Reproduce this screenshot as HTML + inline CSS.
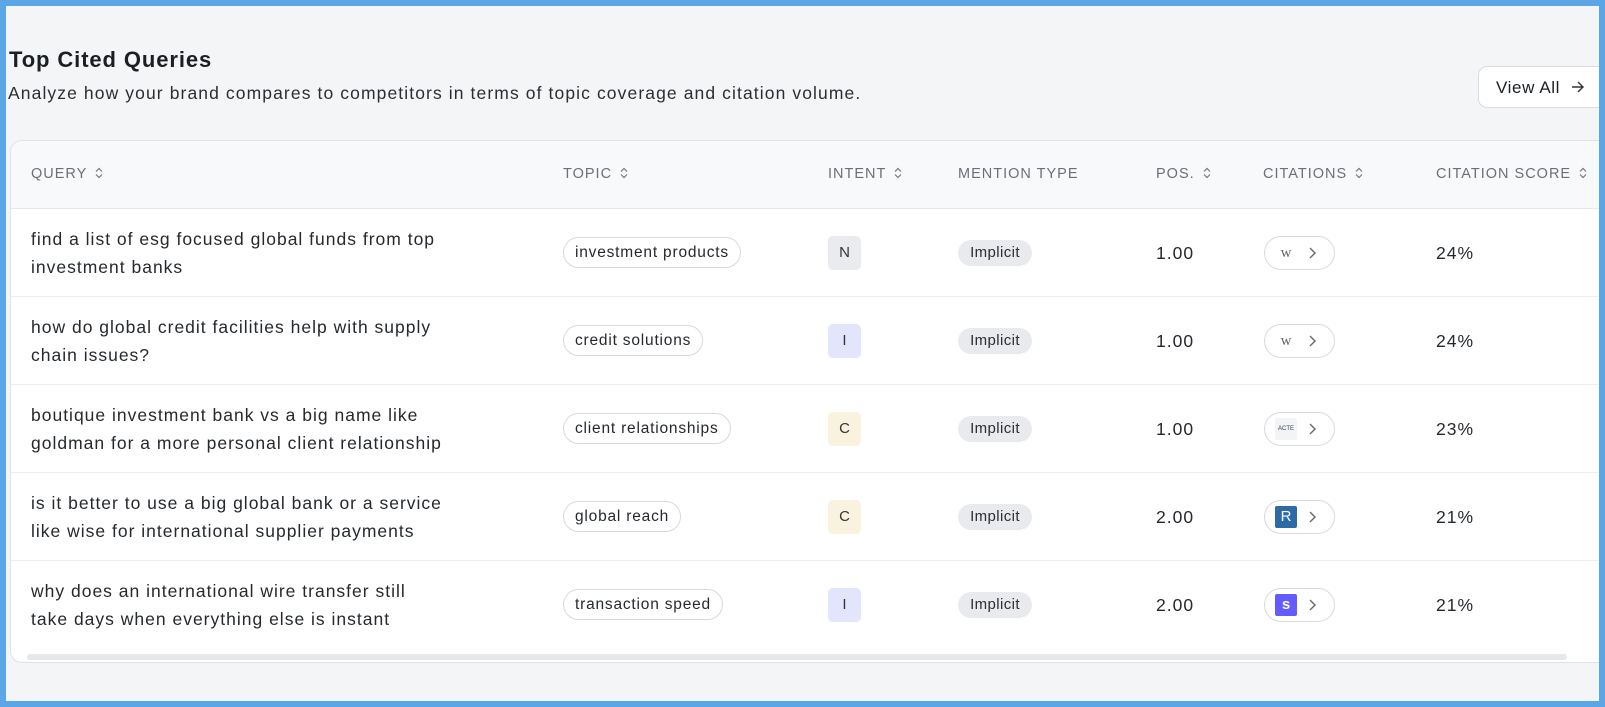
<!DOCTYPE html>
<html><head><style>
*{box-sizing:border-box;margin:0;padding:0}
body{width:1605px;height:707px;overflow:hidden;background:#5aa6e6;font-family:"Liberation Sans",sans-serif;color:#1f2328;position:relative}
.page{position:absolute;left:6px;top:6px;width:1593px;height:695px;background:#f4f5f7;overflow:hidden}
h1{position:absolute;left:3px;top:41px;font-size:22px;font-weight:bold;color:#1b1f24;letter-spacing:.9px}
.sub{position:absolute;left:2px;top:77px;font-size:17.5px;color:#2a2e33;letter-spacing:1.1px}
.btn{position:absolute;left:1472px;top:60px;width:180px;height:42px;background:#fff;border:1px solid #d9dce0;border-radius:9px;font-size:17px;padding:11px 0 0 17px;color:#1b1f24;letter-spacing:.6px}
.card{position:absolute;left:4px;top:134px;width:1620px;height:523px;background:#fff;border:1px solid #dfe2e6;border-radius:12px;overflow:hidden}
.hdr{position:absolute;left:0;top:0;width:100%;height:68px;background:#f8f9fa;border-bottom:1px solid #e6e8eb}
.h{position:absolute;top:25px;font-size:14.5px;color:#6b7078;letter-spacing:1px;white-space:nowrap}
.h svg{vertical-align:-1px;margin-left:8px}
.row{position:absolute;left:0;width:100%;height:88px;border-bottom:1px solid #eceef0}
.q{position:absolute;left:20px;top:16px;font-size:17.5px;line-height:28px;color:#25292e;letter-spacing:1px;white-space:nowrap}
.topic{position:absolute;left:552px;top:28px;height:31px;border:1px solid #d6d9dd;border-radius:16px;padding:6px 11px;font-size:15.5px;color:#25292e;white-space:nowrap;letter-spacing:.8px}
.int{position:absolute;left:817px;top:27px;width:33px;height:34px;border-radius:5px;font-size:15px;text-align:center;line-height:34px;color:#333}
.imp{position:absolute;left:947px;top:31px;width:74px;height:26px;border-radius:13px;background:#e8eaed;text-align:center;line-height:26px;font-size:15px;color:#2a2e33;letter-spacing:.4px}
.pos{position:absolute;left:1145px;top:34px;font-size:17.5px;color:#25292e;letter-spacing:1px}
.cit{position:absolute;left:1253px;top:27px;width:71px;height:34px;border:1px solid #d6d9dd;border-radius:17px}
.ic{position:absolute;left:10px;top:5px;width:22px;height:22px;font-size:13px;text-align:center;line-height:22px;border-radius:2px}
.ch{position:absolute;left:43px;top:10px}
.sc{position:absolute;left:1425px;top:34px;font-size:17.5px;color:#25292e;letter-spacing:1px}
.sb{position:absolute;left:16px;top:513px;width:1540px;height:6px;background:#e6e8eb;border-radius:3px}
</style></head><body><div class="page">
<h1>Top Cited Queries</h1>
<div class="sub">Analyze how your brand compares to competitors in terms of topic coverage and citation volume.</div>
<div class="btn">View All &nbsp;<svg width="14" height="14" viewBox="0 0 14 14" style="vertical-align:-1px"><path d="M1 7h11M7 2l5 5-5 5" stroke="#333" stroke-width="1.4" fill="none"/></svg></div>
<div class="card">
<div class="hdr">
<div class="h" style="left:20px">QUERY<svg width="8" height="12" viewBox="0 0 8 12"><path d="M1 4.5 4 1.5 7 4.5M1 7.5 4 10.5 7 7.5" stroke="#777" stroke-width="1.2" fill="none"/></svg></div>
<div class="h" style="left:552px">TOPIC<svg width="8" height="12" viewBox="0 0 8 12"><path d="M1 4.5 4 1.5 7 4.5M1 7.5 4 10.5 7 7.5" stroke="#777" stroke-width="1.2" fill="none"/></svg></div>
<div class="h" style="left:817px">INTENT<svg width="8" height="12" viewBox="0 0 8 12"><path d="M1 4.5 4 1.5 7 4.5M1 7.5 4 10.5 7 7.5" stroke="#777" stroke-width="1.2" fill="none"/></svg></div>
<div class="h" style="left:947px">MENTION TYPE</div>
<div class="h" style="left:1145px">POS.<svg width="8" height="12" viewBox="0 0 8 12"><path d="M1 4.5 4 1.5 7 4.5M1 7.5 4 10.5 7 7.5" stroke="#777" stroke-width="1.2" fill="none"/></svg></div>
<div class="h" style="left:1252px">CITATIONS<svg width="8" height="12" viewBox="0 0 8 12"><path d="M1 4.5 4 1.5 7 4.5M1 7.5 4 10.5 7 7.5" stroke="#777" stroke-width="1.2" fill="none"/></svg></div>
<div class="h" style="left:1425px">CITATION SCORE<svg width="8" height="12" viewBox="0 0 8 12"><path d="M1 4.5 4 1.5 7 4.5M1 7.5 4 10.5 7 7.5" stroke="#777" stroke-width="1.2" fill="none"/></svg></div>
</div>
<div class="row" style="top:68px"><div class="q">find a list of esg focused global funds from top<br>investment banks</div><div class="topic">investment products</div><div class="int" style="background:#e9ebee">N</div><div class="imp">Implicit</div><div class="pos">1.00</div><div class="cit"><div class="ic" style="font-family:'Liberation Serif',serif;color:#666;font-size:15px">w</div><svg class="ch" width="8" height="12" viewBox="0 0 8 12"><path d="M2 1l5 5-5 5" stroke="#666" stroke-width="1.4" fill="none"/></svg></div><div class="sc">24%</div></div>
<div class="row" style="top:156px"><div class="q">how do global credit facilities help with supply<br>chain issues?</div><div class="topic">credit solutions</div><div class="int" style="background:#e2e5fb">I</div><div class="imp">Implicit</div><div class="pos">1.00</div><div class="cit"><div class="ic" style="font-family:'Liberation Serif',serif;color:#666;font-size:15px">w</div><svg class="ch" width="8" height="12" viewBox="0 0 8 12"><path d="M2 1l5 5-5 5" stroke="#666" stroke-width="1.4" fill="none"/></svg></div><div class="sc">24%</div></div>
<div class="row" style="top:244px"><div class="q">boutique investment bank vs a big name like<br>goldman for a more personal client relationship</div><div class="topic">client relationships</div><div class="int" style="background:#f8f2df">C</div><div class="imp">Implicit</div><div class="pos">1.00</div><div class="cit"><div class="ic" style="font-size:6px;color:#345;background:#f3f4f6">ACTE</div><svg class="ch" width="8" height="12" viewBox="0 0 8 12"><path d="M2 1l5 5-5 5" stroke="#666" stroke-width="1.4" fill="none"/></svg></div><div class="sc">23%</div></div>
<div class="row" style="top:332px"><div class="q">is it better to use a big global bank or a service<br>like wise for international supplier payments</div><div class="topic">global reach</div><div class="int" style="background:#f8f2df">C</div><div class="imp">Implicit</div><div class="pos">2.00</div><div class="cit"><div class="ic" style="background:#2e6aa6;color:#fff;font-size:15px">R</div><svg class="ch" width="8" height="12" viewBox="0 0 8 12"><path d="M2 1l5 5-5 5" stroke="#666" stroke-width="1.4" fill="none"/></svg></div><div class="sc">21%</div></div>
<div class="row" style="top:420px;border-bottom:none"><div class="q">why does an international wire transfer still<br>take days when everything else is instant</div><div class="topic">transaction speed</div><div class="int" style="background:#e2e5fb">I</div><div class="imp">Implicit</div><div class="pos">2.00</div><div class="cit"><div class="ic" style="background:#635bff;color:#fff;font-weight:bold;font-size:15px">s</div><svg class="ch" width="8" height="12" viewBox="0 0 8 12"><path d="M2 1l5 5-5 5" stroke="#666" stroke-width="1.4" fill="none"/></svg></div><div class="sc">21%</div></div>
<div class="sb"></div>
</div>
</div></body></html>
